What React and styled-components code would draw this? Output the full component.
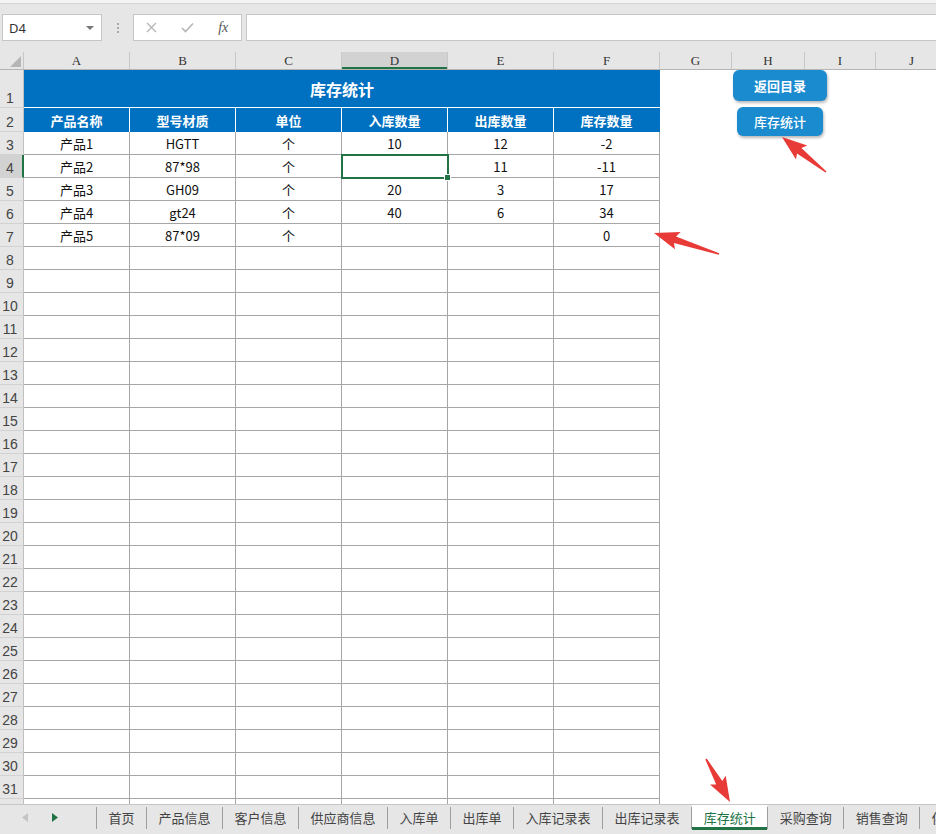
import React from 'react'
import styled, { createGlobalStyle } from 'styled-components'

const GREEN = '#217346'
const BLUE = '#0070c0'
const GRID = '#a6a6a6'

const GlobalStyle = createGlobalStyle`
	html, body { margin: 0; padding: 0; background: #fff; }
	body { font-family: "Noto Sans CJK SC", "Noto Sans", sans-serif; }
`

const Window = styled.div`
	position: relative;
	width: 936px;
	height: 834px;
	overflow: hidden;
	display: flex;
	flex-direction: column;
	background: #e6e6e6;
`

const TopStrip = styled.div`
	height: 3px;
	background: #f3f3f3;
	border-bottom: 1px solid #d4d4d4;
`

const FormulaBar = styled.div`
	display: flex;
	align-items: center;
	height: 27px;
	margin: 10px 0 11px;
	padding-left: 2px;
`

const NameBox = styled.div`
	box-sizing: border-box;
	width: 100px;
	flex-shrink: 0;
	height: 27px;
	background: #fff;
	border: 1px solid #c6c6c6;
	display: flex;
	align-items: center;
	justify-content: space-between;
	padding: 0 7px 0 6px;
	font: 13px "Noto Sans", "Liberation Sans", sans-serif;
	color: #333;
`

const Caret = styled.span`
	width: 0;
	height: 0;
	border-left: 4px solid transparent;
	border-right: 4px solid transparent;
	border-top: 4px solid #777;
`

const Dots = styled.div`
	width: 31px;
	flex-shrink: 0;
	display: flex;
	flex-direction: column;
	align-items: center;
	gap: 2px;
	span { width: 2px; height: 2px; background: #a8a8a8; }
`

const FxBox = styled.div`
	box-sizing: border-box;
	width: 109px;
	flex-shrink: 0;
	height: 27px;
	background: #fff;
	border: 1px solid #c6c6c6;
	display: flex;
	align-items: center;
`

const FxSlot = styled.div`
	width: 36px;
	display: flex;
	justify-content: center;
	align-items: center;
	font: italic 14px "Liberation Serif", serif;
	color: #555;
`

const Input = styled.div`
	flex: 1;
	height: 27px;
	box-sizing: border-box;
	margin-left: 4px;
	background: #fff;
	border: 1px solid #c6c6c6;
	border-right: none;
`

const ColHeaderRow = styled.div`
	display: flex;
	height: 18px;
	box-sizing: border-box;
	border-bottom: 1px solid #b4b4b4;
	background: #e6e6e6;
	overflow: hidden;
`

const Corner = styled.div`
	width: 24px;
	flex-shrink: 0;
	box-sizing: border-box;
	border-right: 1px solid #c6c6c6;
	display: flex;
	align-items: flex-end;
	justify-content: flex-end;
	padding: 0 2px 2px 0;
`

const ColHead = styled.div`
	box-sizing: border-box;
	width: ${p => p.w}px;
	flex-shrink: 0;
	border-right: 1px solid #c8c8c8;
	display: flex;
	align-items: center;
	justify-content: center;
	font: 13px "Liberation Serif", serif;
	color: #333;
	background: ${p => (p.active ? '#d2d2d2' : 'transparent')};
	box-shadow: ${p => (p.active ? `inset 0 -2px 0 ${GREEN}` : 'none')};
`

const Sheet = styled.div`
	position: relative;
	flex: 1;
	background: #fff;
	overflow: hidden;
`

const Row = styled.div`
	display: flex;
	height: ${p => p.h}px;
`

const RowHead = styled.div`
	box-sizing: border-box;
	width: 24px;
	flex-shrink: 0;
	background: ${p => (p.active ? '#d2d2d2' : '#e6e6e6')};
	border-right: ${p => (p.active ? `2px solid ${GREEN}` : '1px solid #c0c0c0')};
	border-bottom: 1px solid #d2d2d2;
	display: flex;
	align-items: flex-end;
	justify-content: center;
	padding: 0 ${p => (p.active ? 2 : 3)}px 1px 0;
	font: 14px "Liberation Sans", sans-serif;
	color: #444;
`

const Title = styled.div`
	box-sizing: border-box;
	width: 636px;
	flex-shrink: 0;
	background: ${BLUE};
	border-bottom: 1px solid #fff;
	display: flex;
	align-items: center;
	justify-content: center;
	color: #fff;
	font-size: 16px;
	font-weight: 700;
`

const HeadCell = styled.div`
	box-sizing: border-box;
	width: 106px;
	flex-shrink: 0;
	background: ${BLUE};
	border-right: 1px solid ${p => (p.last ? BLUE : '#fff')};
	display: flex;
	align-items: center;
	justify-content: center;
	color: #fff;
	font-size: 13px;
	font-weight: 700;
`

const Cell = styled.div`
	position: relative;
	box-sizing: border-box;
	width: 106px;
	flex-shrink: 0;
	border-right: 1px solid ${GRID};
	border-bottom: 1px solid ${GRID};
	display: flex;
	align-items: center;
	justify-content: center;
	font-size: 13px;
	color: #111;
	${p => p.selected && `
		outline: 2px solid ${GREEN};
		outline-offset: -1px;
		z-index: 1;
		&::after {
			content: '';
			position: absolute;
			right: -4px;
			bottom: -4px;
			width: 5px;
			height: 5px;
			background: ${GREEN};
			border: 1px solid #fff;
		}
	`}
`

const Button = styled.div`
	position: absolute;
	left: ${p => p.x}px;
	top: ${p => p.y}px;
	width: ${p => p.w}px;
	height: ${p => p.h}px;
	border-radius: 6px;
	background: #1a8bcf;
	box-shadow: 1px 2px 3px rgba(0, 0, 0, 0.28);
	display: flex;
	align-items: center;
	justify-content: center;
	color: #fff;
	font-size: 13px;
	font-weight: ${p => (p.bold ? 700 : 500)};
`

const TabBar = styled.div`
	display: flex;
	height: 30px;
	box-sizing: border-box;
	border-top: 1px solid #c6c6c6;
	padding-bottom: 4px;
	background: #e6e6e6;
	overflow: hidden;
`

const Nav = styled.div`
	width: 96px;
	flex-shrink: 0;
	display: flex;
	align-items: center;
	padding-left: 22px;
	gap: 24px;
	box-sizing: border-box;
`

const Sep = styled.div`
	width: 1px;
	height: 22px;
	align-self: center;
	background: #9e9e9e;
	flex-shrink: 0;
`

const Tab = styled.div`
	display: flex;
	align-items: center;
	padding: 0 11.5px;
	flex-shrink: 0;
	font-size: 13px;
	white-space: nowrap;
	color: ${p => (p.active ? GREEN : '#444')};
	background: ${p => (p.active ? '#fff' : 'transparent')};
	box-shadow: ${p => (p.active ? `inset 0 -3px 0 ${GREEN}` : 'none')};
`

const Overlay = styled.svg`
	position: absolute;
	left: 0;
	top: 0;
	pointer-events: none;
`

const cols = [
	{ l: 'A', w: 106 }, { l: 'B', w: 106 }, { l: 'C', w: 106 },
	{ l: 'D', w: 106 }, { l: 'E', w: 106 }, { l: 'F', w: 106 },
	{ l: 'G', w: 72 }, { l: 'H', w: 73 }, { l: 'I', w: 71 }, { l: 'J', w: 72 },
]

const heads = ['产品名称', '型号材质', '单位', '入库数量', '出库数量', '库存数量']

const data = [
	['产品1', 'HGTT', '个', '10', '12', '-2'],
	['产品2', '87*98', '个', '', '11', '-11'],
	['产品3', 'GH09', '个', '20', '3', '17'],
	['产品4', 'gt24', '个', '40', '6', '34'],
	['产品5', '87*09', '个', '', '', '0'],
]

const tabs = ['首页', '产品信息', '客户信息', '供应商信息', '入库单', '出库单', '入库记录表', '出库记录表', '库存统计', '采购查询', '销售查询', '供应商查询']

function arrowPoints([tx, ty], [px, py], headLen = 22, headW = 9, neckW = 3.5, tailW = 0.8) {
	const L = Math.hypot(px - tx, py - ty)
	const ux = (px - tx) / L, uy = (py - ty) / L
	const nx = -uy, ny = ux
	const bx = px - ux * headLen, by = py - uy * headLen
	const wx = px - ux * (headLen + 3), wy = py - uy * (headLen + 3)
	const pts = [
		[tx + nx * tailW, ty + ny * tailW],
		[bx + nx * neckW, by + ny * neckW],
		[wx + nx * headW, wy + ny * headW],
		[px, py],
		[wx - nx * headW, wy - ny * headW],
		[bx - nx * neckW, by - ny * neckW],
		[tx - nx * tailW, ty - ny * tailW],
	]
	return pts.map(p => p.map(v => v.toFixed(1)).join(',')).join(' ')
}

const arrows = [
	[[826, 172], [782, 137]],
	[[719, 254], [654, 233]],
	[[706, 759], [730, 802]],
]

const Extra = () => cols.slice(6).map(c => <div key={c.l} style={{ width: c.w, flexShrink: 0 }} />)

export default function App() {
	const blank = Array.from({ length: 25 }, (_, i) => i + 8)
	return (
		<Window>
			<GlobalStyle />
			<TopStrip />
			<FormulaBar>
				<NameBox>D4<Caret /></NameBox>
				<Dots><span /><span /><span /></Dots>
				<FxBox>
					<FxSlot>
						<svg width="11" height="11" viewBox="0 0 11 11"><path d="M1 1L10 10M10 1L1 10" stroke="#b5b5b5" strokeWidth="1.3" /></svg>
					</FxSlot>
					<FxSlot>
						<svg width="13" height="11" viewBox="0 0 13 11"><path d="M1 6L4.5 9.5L12 1.5" stroke="#b5b5b5" strokeWidth="1.6" fill="none" /></svg>
					</FxSlot>
					<FxSlot>fx</FxSlot>
				</FxBox>
				<Input />
			</FormulaBar>
			<ColHeaderRow>
				<Corner>
					<svg width="11" height="11" viewBox="0 0 11 11"><path d="M11 0L11 11L0 11Z" fill="#b5b5b5" /></svg>
				</Corner>
				{cols.map(c => <ColHead key={c.l} w={c.w} active={c.l === 'D'}>{c.l}</ColHead>)}
			</ColHeaderRow>
			<Sheet>
				<Row h={38}>
					<RowHead>1</RowHead>
					<Title>库存统计</Title>
					<Extra />
				</Row>
				<Row h={24}>
					<RowHead>2</RowHead>
					{heads.map((h, i) => <HeadCell key={h} last={i === 5}>{h}</HeadCell>)}
					<Extra />
				</Row>
				{data.map((r, i) => (
					<Row h={23} key={i}>
						<RowHead active={i === 1}>{i + 3}</RowHead>
						{r.map((v, j) => <Cell key={j} selected={i === 1 && j === 3}>{v}</Cell>)}
						<Extra />
					</Row>
				))}
				{blank.map(n => (
					<Row h={23} key={n}>
						<RowHead>{n}</RowHead>
						{heads.map((h, j) => <Cell key={j} />)}
						<Extra />
					</Row>
				))}
				<Button x={733} y={0} w={94} h={31} bold>返回目录</Button>
				<Button x={737} y={37} w={86} h={29}>库存统计</Button>
			</Sheet>
			<TabBar>
				<Nav>
					<svg width="6" height="9" viewBox="0 0 6 9"><path d="M6 0L6 9L0 4.5Z" fill="#c4c4c4" /></svg>
					<svg width="6" height="9" viewBox="0 0 6 9"><path d="M0 0L0 9L6 4.5Z" fill={GREEN} /></svg>
				</Nav>
				{tabs.map(t => (
					<React.Fragment key={t}>
						<Sep />
						<Tab active={t === '库存统计'}>{t}</Tab>
					</React.Fragment>
				))}
			</TabBar>
			<Overlay width="936" height="834">
				{arrows.map((a, i) => <polygon key={i} points={arrowPoints(a[0], a[1])} fill="#e83a36" />)}
			</Overlay>
		</Window>
	)
}
